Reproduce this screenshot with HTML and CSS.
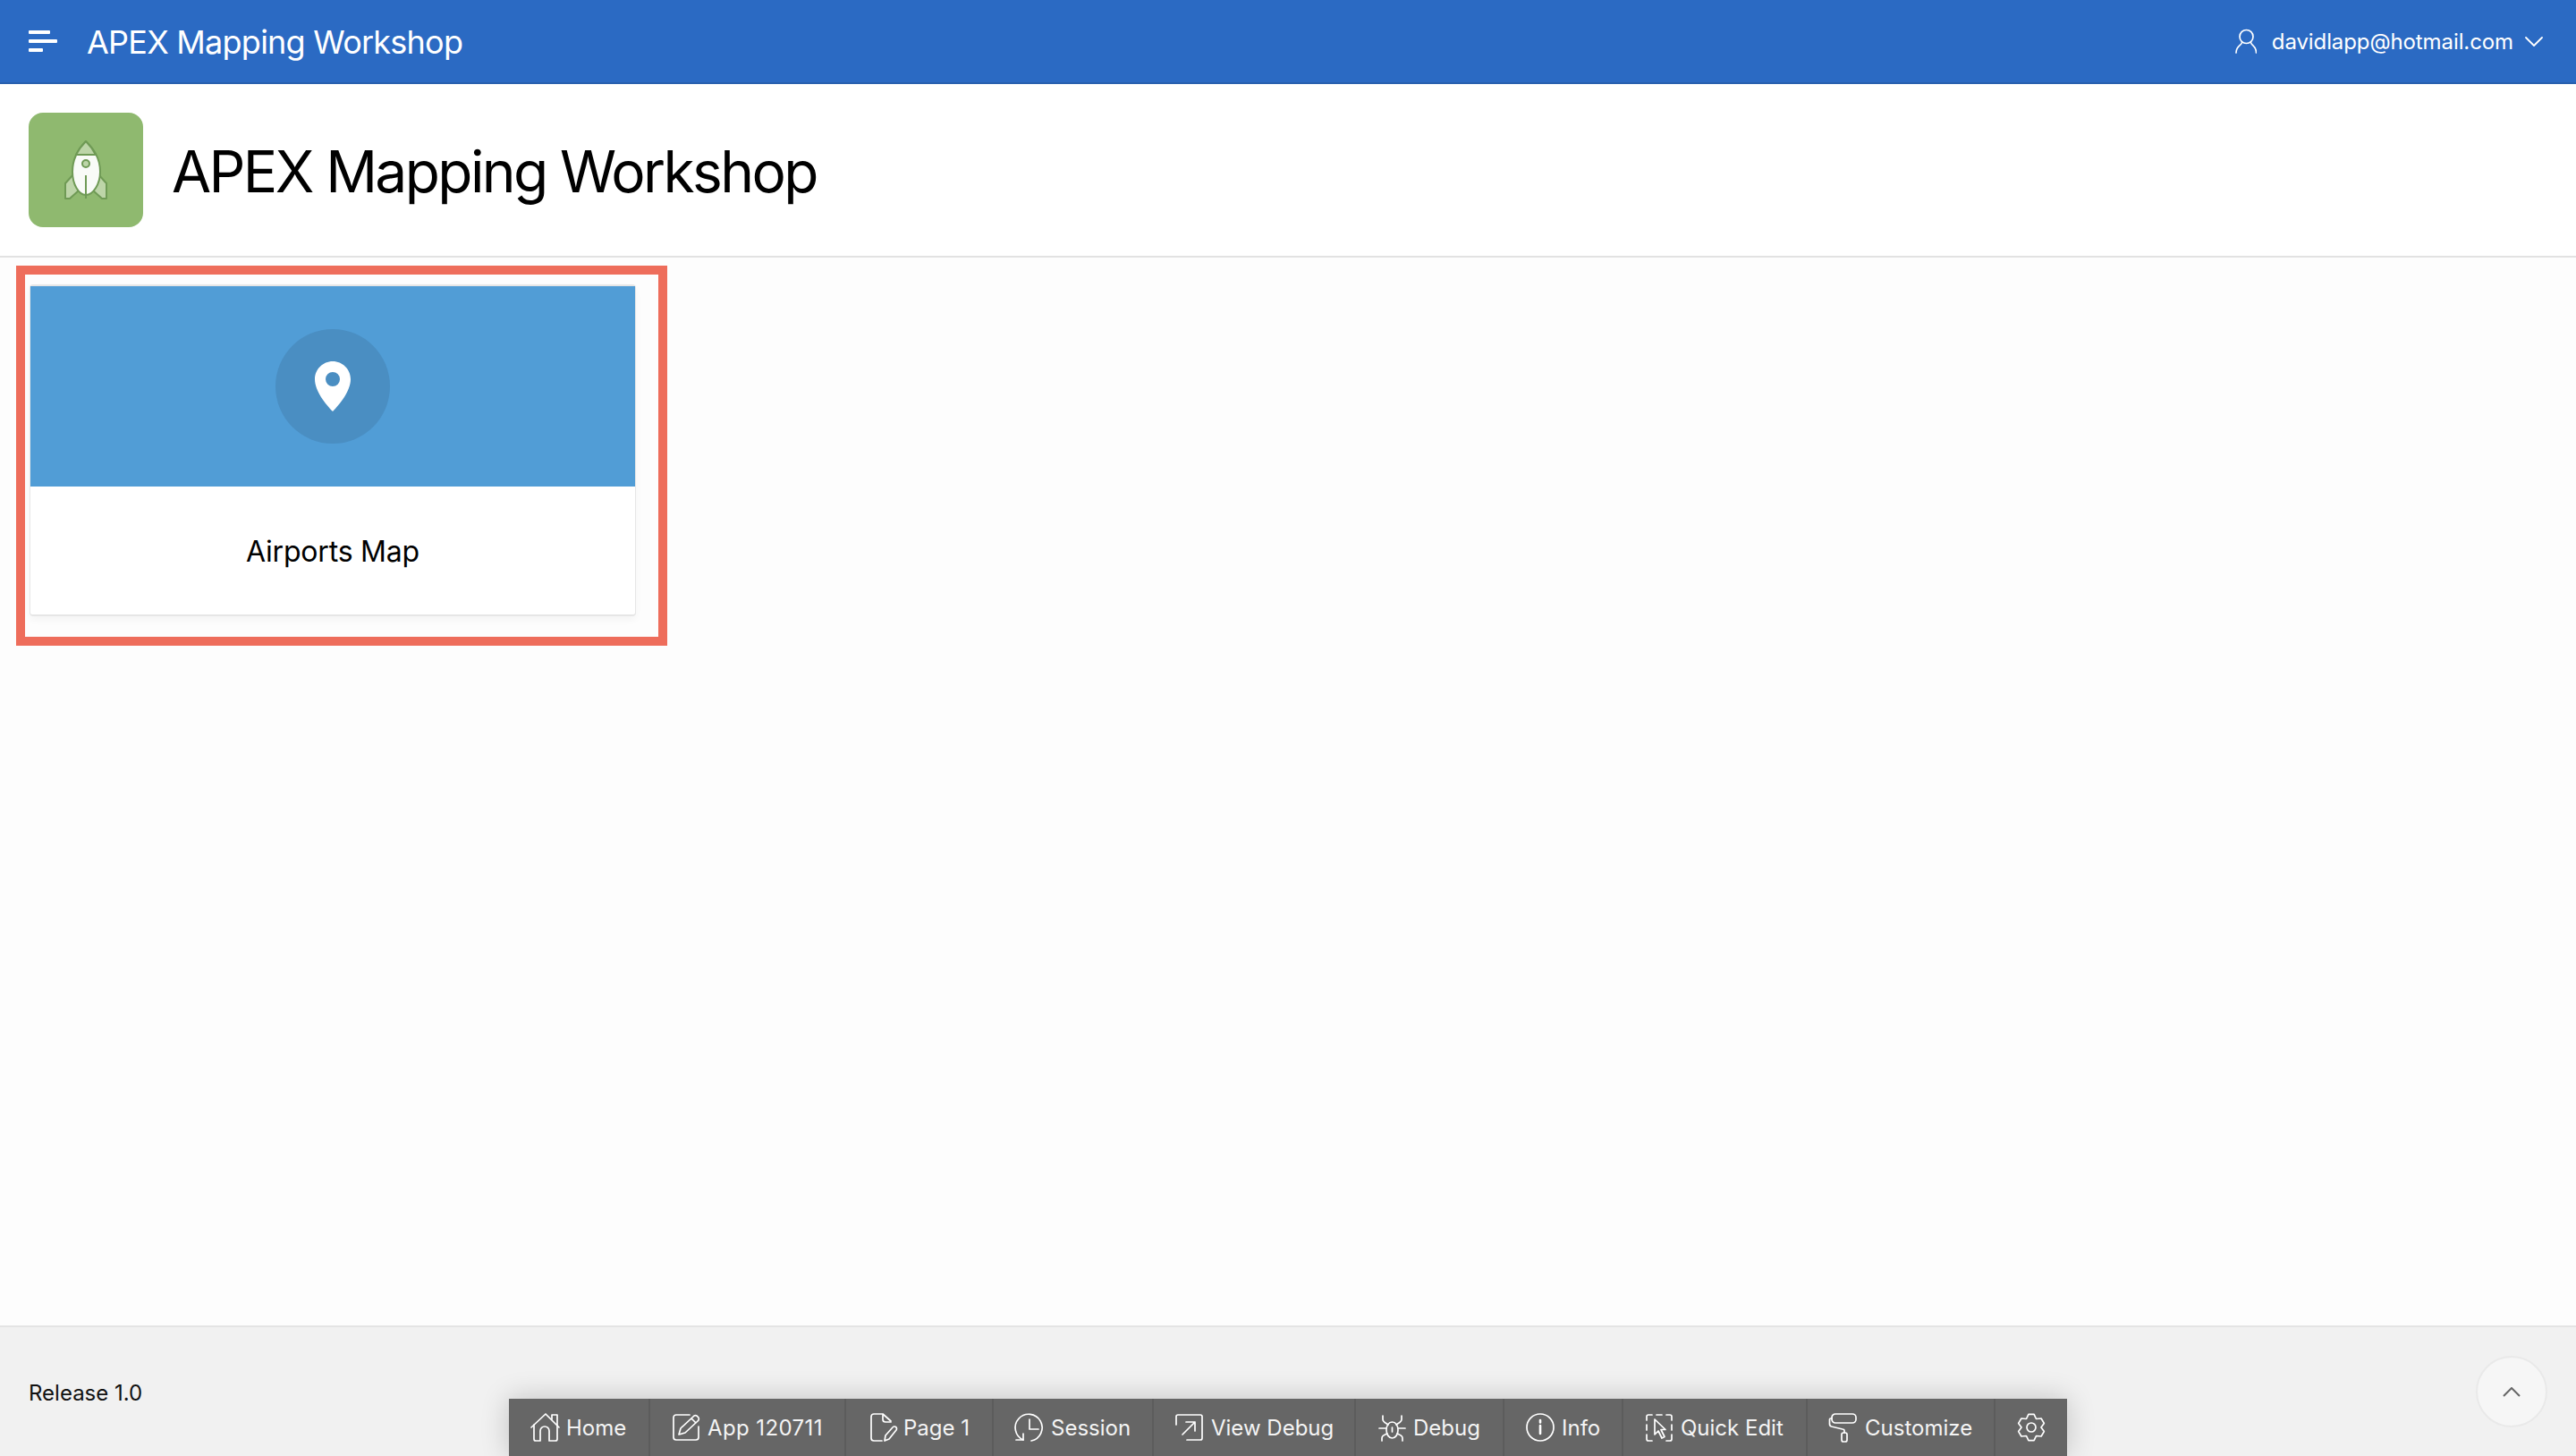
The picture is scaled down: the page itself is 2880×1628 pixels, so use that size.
FILE: index.html
```html
<!DOCTYPE html>
<html lang="en">
<head>
  <meta charset="UTF-8">
  <title>APEX Mapping Workshop</title>
  <link rel="stylesheet" href="styles.css">
</head>
<body>
  <header class="topbar">
    <div class="topbar-left">
      <div class="menu-btn"><span></span><span></span><span></span></div>
      <div class="app-name">APEX Mapping Workshop</div>
    </div>
    <div class="user-menu">
      <svg class="user-icon" viewBox="0 0 24 28" fill="none" stroke="#fff" stroke-width="1.7" stroke-linecap="round">
        <circle cx="12.5" cy="9" r="7.5"/>
        <path d="M7.5 15.5C7 19 1 19 1 27M17.5 15.5C18 19 23.5 19 23.5 27"/>
      </svg>
      <span class="user-name">davidlapp@hotmail.com</span>
      <svg class="user-caret" viewBox="0 0 20 11" fill="none" stroke="#fff" stroke-width="1.8" stroke-linecap="round" stroke-linejoin="round">
        <path d="M1 1l9 9 9-9"/>
      </svg>
    </div>
  </header>

  <section class="hero">
    <div class="hero-icon">
      <svg viewBox="0 0 128 128" width="128" height="128" stroke="#6f9a55" stroke-width="2" stroke-linejoin="round">
        <path fill="#bdd5a8" d="M50 69L41 79V96H46L56 87Z"/>
        <path fill="#bdd5a8" d="M78 69L87 79V96H82L72 87Z"/>
        <path fill="#f9fbf7" d="M64 32C72 40 80 50 80 66C80 80 72 92 64 92C56 92 49 80 49 66C49 50 56 40 64 32Z"/>
        <path fill="#bdd5a8" d="M64 32C68 36 72 41 75 47H53C56 41 60 36 64 32Z"/>
        <circle cx="64" cy="57" r="4" fill="#bdd5a8"/>
        <path fill="none" d="M64 70V96"/>
      </svg>
    </div>
    <h1 class="hero-title">APEX Mapping Workshop</h1>
  </section>

  <main class="content">
    <a class="card">
      <div class="card-top">
        <div class="card-circle">
          <svg viewBox="0 0 40 56" width="40" height="56">
            <path fill="#fff" fill-rule="evenodd" d="M20 0C31 0 40 9 40 20C40 33 28 48 20 56C12 48 0 33 0 20C0 9 9 0 20 0ZM20 12a8 8 0 1 0 0 16a8 8 0 1 0 0-16Z"/>
          </svg>
        </div>
      </div>
      <div class="card-label">Airports Map</div>
    </a>
    <div class="callout"></div>
  </main>

  <footer class="footer">
    <span class="release">Release 1.0</span>
    <div class="top-btn">
      <svg viewBox="0 0 20 11" width="20" height="11" fill="none" stroke="#666" stroke-width="2">
        <path d="M1 10l9-9 9 9"/>
      </svg>
    </div>
  </footer>

  <nav class="devbar">
    <a class="dev-item">
      <svg class="dev-icon" viewBox="0 0 32 32"><path d="M1 16L17 1l15 15"/><path d="M4 13v16a2 2 0 0 0 2 2h5V20a5 5 0 0 1 10 0v11h7a2 2 0 0 0 2-2V2h-6v5"/></svg>
      <span>Home</span>
    </a>
    <a class="dev-item">
      <svg class="dev-icon" viewBox="0 0 32 32"><path d="M20 2H5a3 3 0 0 0-3 3v22a3 3 0 0 0 3 3h22a3 3 0 0 0 3-3V15"/><path d="M8 24l2-7L24 4a3 3 0 0 1 5 0 3 3 0 0 1 0 5L15 22zM22 6l5 5"/></svg>
      <span class="app-id">App 120711</span>
    </a>
    <a class="dev-item">
      <svg class="dev-icon" viewBox="0 0 32 32"><path d="M16 31H7a3 3 0 0 1-3-3V4a3 3 0 0 1 3-3h10l9 8"/><path d="M17 2v5a3 3 0 0 0 3 3h6"/><path d="M19 31l1-6 8-9a2.500 2.500 0 0 1 4 3l-8 10z"/></svg>
      <span>Page 1</span>
    </a>
    <a class="dev-item">
      <svg class="dev-icon" viewBox="0 0 32 32"><path d="M9 30A15 15 0 1 1 18 31"/><path d="M16 7v11h10"/><path d="M1 30h8v-7"/></svg>
      <span>Session</span>
    </a>
    <a class="dev-item">
      <svg class="dev-icon" viewBox="0 0 32 32"><path d="M1 13V4a2 2 0 0 1 2-2h25a2 2 0 0 1 2 2v24a2 2 0 0 1-2 2H13"/><path d="M8 24L22 10M12 10h10v10"/></svg>
      <span>View Debug</span>
    </a>
    <a class="dev-item">
      <svg class="dev-icon" viewBox="0 0 32 32"><path d="M6 3v4c0 3 3 4 6 6M27 3v4c0 3-3 4-6 6M2 17h8M23 17h8M5 31v-3c0-3 3-4 6-5M28 31v-3c0-3-3-4-6-5"/><path d="M16.500 10c4 0 6.500 4 6.500 9s-3 9-6.500 9S10 24 10 19s2.500-9 6.500-9z"/><path d="M16.500 16v5"/></svg>
      <span>Debug</span>
    </a>
    <a class="dev-item">
      <svg class="dev-icon" viewBox="0 0 32 32"><circle cx="16" cy="16" r="15"/><path class="thick" d="M16 14v9M16 8v2.500"/></svg>
      <span>Info</span>
    </a>
    <a class="dev-item">
      <svg class="dev-icon" viewBox="0 0 32 32"><path d="M8 2H4a2 2 0 0 0-2 2v4M13 2h6M24 2h4a2 2 0 0 1 2 2v4M2 13v6M30 13v6M2 24v5a2 2 0 0 0 2 2h4M24 31h4a2 2 0 0 0 2-2v-5"/><path d="M11 7v17l4-4 4 8 3-1.500-4-8h5z"/></svg>
      <span>Quick Edit</span>
    </a>
    <a class="dev-item">
      <svg class="dev-icon" viewBox="0 0 32 32"><rect x="3" y="1" width="27" height="10" rx="4"/><path d="M3 6H1.500A1 1 0 0 0 .5 7v5a3 3 0 0 0 2 3L15 18a2 2 0 0 1 2 2v2"/><rect x="14" y="22" width="6" height="10" rx="2"/></svg>
      <span>Customize</span>
    </a>
    <a class="dev-item">
      <svg class="dev-icon" viewBox="0 0 32 32"><circle cx="16" cy="16" r="5"/><path d="M12.900 1.300H19.100L21.500 6.500L27.100 6L30.300 11.400L27 16L30.300 20.600L27.100 26L21.500 25.500L19.100 30.700H12.900L10.500 25.500L4.900 26L1.700 20.600L5 16L1.700 11.400L4.900 6L10.500 6.500Z"/></svg>
    </a>
  </nav>
</body>
</html>
```

FILE: styles.css
```css
* { box-sizing: border-box; }

html, body { height: 100%; }

body {
  margin: 0;
  height: 1628px;
  overflow: hidden;
  display: flex;
  flex-direction: column;
  position: relative;
  font-family: "Inter", "Liberation Sans", sans-serif;
  background: #fdfdfd;
  color: #000;
}

/* top bar */
.topbar {
  height: 94px;
  flex: none;
  display: flex;
  align-items: center;
  justify-content: space-between;
  padding: 0 37px 0 32px;
  background: #2b6ac3;
  border-bottom: 2px solid #2860ae;
  color: #fff;
}
.topbar-left { display: flex; align-items: center; }
.menu-btn {
  width: 32px;
  display: flex;
  flex-direction: column;
  gap: 6px;
  margin-right: 33px;
}
.menu-btn span { display: block; height: 4px; background: #fff; border-radius: 1px; }
.menu-btn span:nth-child(1) { width: 24px; }
.menu-btn span:nth-child(2) { width: 32px; }
.menu-btn span:nth-child(3) { width: 16px; }
.app-name { margin-top: 2px; font-size: 36px; line-height: 44px; letter-spacing: -0.76px; }

.user-menu { display: flex; align-items: center; }
.user-icon { width: 24px; height: 28px; margin-right: 17px; }
.user-name { margin-top: 2px; font-size: 24px; line-height: 32px; letter-spacing: -0.1px; }
.user-caret { width: 20px; height: 11px; margin-left: 13px; }

/* page title */
.hero {
  height: 194px;
  flex: none;
  display: flex;
  align-items: center;
  padding: 0 32px;
  background: #fff;
  border-bottom: 2px solid #e2e2e2;
}
.hero-icon {
  width: 128px;
  height: 128px;
  margin-right: 32px;
  border-radius: 16px;
  background: #8fb96f;
}
.hero-icon svg { display: block; }
.hero-title { margin: 4px 0 0; font-size: 64px; font-weight: 400; line-height: 80px; letter-spacing: -2.6px; }

/* cards */
.content { flex: 1; padding: 30px 0 0 33px; }
.card {
  display: block;
  width: 678px;
  height: 371px;
  background: #fff;
  border: solid #e6e6e6;
  border-width: 2px 1px;
  border-radius: 4px;
  box-shadow: 0 4px 8px rgba(0,0,0,0.04);
}
.card-top {
  height: 224px;
  display: flex;
  align-items: center;
  justify-content: center;
  background: #519dd6;
}
.card-circle {
  width: 128px;
  height: 128px;
  display: flex;
  align-items: center;
  justify-content: center;
  border-radius: 50%;
  background: #4a8ec2;
}
.card-circle svg { display: block; }
.card-label {
  height: 145px;
  display: flex;
  align-items: center;
  justify-content: center;
  font-size: 32px;
  letter-spacing: -0.2px;
}

/* red annotation drawn over the screenshot */
.callout {
  position: absolute;
  left: 18px;
  top: 297px;
  width: 728px;
  height: 425px;
  border: 10px solid #ee6d5b;
}

/* footer */
.footer {
  height: 146px;
  flex: none;
  display: flex;
  align-items: center;
  justify-content: space-between;
  padding: 0 32px;
  background: #f1f1f1;
  border-top: 2px solid #e4e4e4;
}
.release { margin-top: 2px; font-size: 24px; color: #111; }
.top-btn {
  width: 80px;
  height: 80px;
  display: flex;
  align-items: center;
  justify-content: center;
  border: 2px solid #e9e9e9;
  border-radius: 50%;
  background: #f6f6f6;
}

/* developer toolbar */
.devbar {
  position: absolute;
  left: 569px;
  bottom: 0;
  width: 1742px;
  height: 64px;
  display: grid;
  grid-template-columns: 156px 219px 165px 179px 226px 166px 133px 206px 210px 82px;
  background: #666;
  box-shadow: 0 0 32px rgba(0,0,0,0.2);
  color: #fff;
}
.dev-item {
  display: flex;
  align-items: center;
  gap: 8px;
  padding-left: 24px;
  font-size: 24px;
  border-left: 2px solid #5c5c5c;
  color: #f4f4f4;
}
.dev-item:first-child { border-left: 0; }
.app-id { letter-spacing: 0.4px; }
.dev-icon {
  width: 32px;
  height: 32px;
  flex: none;
  overflow: visible;
  fill: none;
  stroke: #fff;
  stroke-width: 1.7;
  stroke-linecap: round;
  stroke-linejoin: round;
}
.dev-icon .thick { stroke-width: 2.6; }
```
